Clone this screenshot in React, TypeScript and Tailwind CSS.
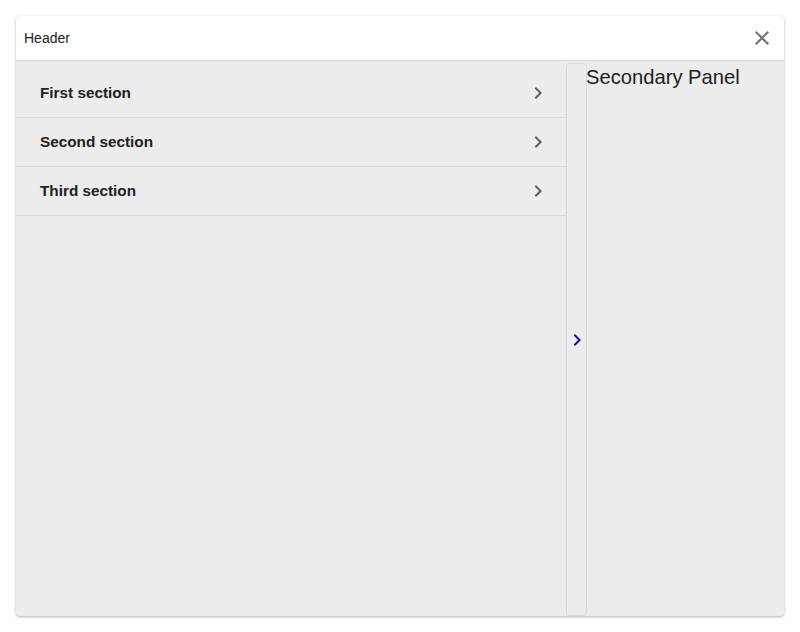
import React from "react";

const Chevron = ({ className }: { className?: string }) => (
  <svg viewBox="0 0 24 24" width="24" height="24" className={className} fill="currentColor">
    <path d="M10 6 8.59 7.41 13.17 12l-4.58 4.59L10 18l6-6z" />
  </svg>
);

export default function App() {
  const sections = ["First section", "Second section", "Third section"];
  return (
    <div className="w-[800px] h-[632px] bg-white p-4" style={{ fontFamily: '"Liberation Sans", Arial, sans-serif' }}>
      <div className="flex h-[600px] flex-col overflow-hidden rounded bg-[#ececec] shadow-[0_1px_3px_rgba(0,0,0,0.3)]">
        <div className="flex h-[45px] shrink-0 items-center justify-between border-b border-[#dcdcdc] bg-white pl-2 pr-[10px]">
          <span className="text-sm text-[#212121]">Header</span>
          <svg viewBox="0 0 24 24" width="24" height="24" fill="#707070">
            <path d="M19 6.41 17.59 5 12 10.59 6.41 5 5 6.41 10.59 12 5 17.59 6.41 19 12 13.41 17.59 19 19 17.59 13.41 12z" />
          </svg>
        </div>
        <div className="flex min-h-0 flex-1">
          <div className="w-[550px] shrink-0 pt-2">
            {sections.map((s) => (
              <div key={s} className="flex h-[49px] items-center justify-between border-b border-[#dadada] pl-6 pr-4">
                <span className="text-[15.3px] font-bold text-[#212121]">{s}</span>
                <Chevron className="text-[#5f5f5f]" />
              </div>
            ))}
          </div>
          <div className="mt-[2px] flex w-[21px] shrink-0 items-center justify-center overflow-visible rounded border border-[#d8d8d8]">
            <svg viewBox="0 0 24 24" width="24" height="24" fill="#1a0dab" className="shrink-0">
              <path d="M10 6 8.59 7.41 13.17 12l-4.58 4.59L10 18l6-6z" />
            </svg>
          </div>
          <div className="-ml-px flex-1 pt-[5px]">
            <div className="text-[20.2px] leading-[23px] text-[#212121]">Secondary Panel</div>
          </div>
        </div>
      </div>
    </div>
  );
}
